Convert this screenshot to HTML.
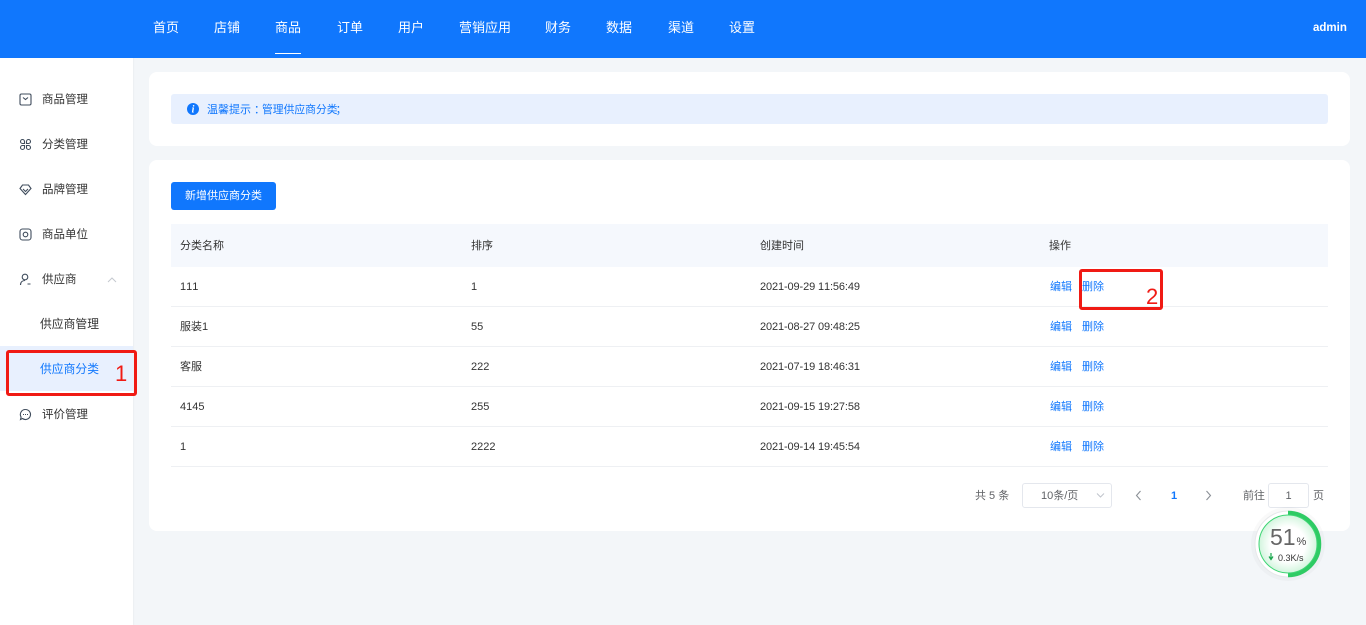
<!DOCTYPE html>
<html lang="zh-CN"><head><meta charset="utf-8"><title>供应商分类</title>
<style>
*{box-sizing:border-box}
html,body{margin:0;padding:0}
body{width:1366px;height:625px;overflow:hidden;position:relative;background:#f3f6f9;font-family:"Liberation Sans","Noto Sans CJK SC",sans-serif;color:#333;font-kerning:none}
.a{position:absolute;white-space:nowrap}
.top{left:0;top:0;width:1366px;height:58px;background:#1077fd}
.nav{top:18px;font-size:13px;line-height:20px;color:#fff}
.side{left:0;top:58px;width:133px;height:567px;background:#fff;box-shadow:1px 0 1px rgba(0,0,0,.03)}
.m{font-size:11.5px;line-height:18px;color:#333}
.s{font-size:11.8px}
.card{background:#fff;border-radius:8px}
.t{font-size:11px;line-height:16px;color:#333}
.d{letter-spacing:-.12px}
.l{font-size:11px;line-height:16px;color:#1077fd}
.line{left:171px;width:1157px;height:1px;background:#eef0f3}
.ic{position:absolute;left:19px;width:13px;height:13px;fill:none;stroke:#3f4c5c;stroke-width:1.100}
.red{border:3px solid #f01a14;border-radius:3px}
.rn{color:#f01a14;font-size:22px;line-height:26px}
</style></head><body>
<div class="a top"></div>
<div class="a nav" style="left:153px">首页</div>
<div class="a nav" style="left:214px">店铺</div>
<div class="a nav" style="left:275px">商品</div>
<div class="a" style="left:275px;top:53px;width:26px;height:1px;background:#fff"></div>
<div class="a nav" style="left:337px">订单</div>
<div class="a nav" style="left:398px">用户</div>
<div class="a nav" style="left:459px">营销应用</div>
<div class="a nav" style="left:545px">财务</div>
<div class="a nav" style="left:606px">数据</div>
<div class="a nav" style="left:668px">渠道</div>
<div class="a nav" style="left:729px">设置</div>
<div class="a" style="left:1313px;top:20px;font-size:11.5px;font-weight:700;line-height:17px;color:#fff">admin</div>

<div class="a side"></div>
<svg class="ic" style="top:93px" viewBox="0 0 13 13"><rect x="1" y="1" width="11" height="11" rx="1.500"/><path d="M4 4.500l2.500 2L9 4.500"/></svg>
<svg class="ic" style="top:138px" viewBox="0 0 13 13"><path d="M5.500 5.500H3.500a2 2 0 1 1 2-2zM7.500 5.500V3.500a2 2 0 1 1 2 2zM5.500 7.500V9.500a2 2 0 1 1-2-2zM7.500 7.500H9.500a2 2 0 1 1-2 2z"/></svg>
<svg class="ic" style="top:183px" viewBox="0 0 13 13"><path d="M3.500 2h6L12 5.500 6.500 11.500 1 5.500zM4 6l2.500 2.500L9 6"/></svg>
<svg class="ic" style="top:228px" viewBox="0 0 13 13"><rect x="1" y="1" width="11" height="11" rx="2.500"/><circle cx="6.500" cy="6.500" r="2.300"/></svg>
<svg class="ic" style="top:273px" viewBox="0 0 13 13"><circle cx="6" cy="4" r="2.800"/><path d="M1.500 12c0-3 2-4.500 4.500-4.500M8.500 11h3"/></svg>
<svg class="ic" style="top:408px" viewBox="0 0 13 13"><path d="M6.500 1.500a5 5 0 1 1-3 9L1.500 11.500l.6-2.400a5 5 0 0 1 4.400-7.600z"/><path d="M4 6.500h1M6 6.500h1M8 6.500h1"/></svg>
<div class="a m" style="left:42px;top:91px">商品管理</div>
<div class="a m" style="left:42px;top:136px">分类管理</div>
<div class="a m" style="left:42px;top:181px">品牌管理</div>
<div class="a m" style="left:42px;top:226px">商品单位</div>
<div class="a m" style="left:42px;top:271px">供应商</div>
<svg class="a" style="left:106px;top:276px" width="12" height="8" viewBox="0 0 12 8" fill="none" stroke="#c4c9cf"><path d="M2 6l4-4 4 4"/></svg>
<div class="a m s" style="left:40px;top:315px">供应商管理</div>
<div class="a" style="left:0;top:346px;width:133px;height:45px;background:#e8f0fe"></div>
<div class="a m s" style="left:40px;top:360px;color:#1077fd">供应商分类</div>
<div class="a m" style="left:42px;top:406px">评价管理</div>

<div class="a card" style="left:149px;top:72px;width:1201px;height:74px"></div>
<div class="a" style="left:171px;top:94px;width:1157px;height:30px;background:#e8f0fe;border-radius:3px"></div>
<svg class="a" style="left:186px;top:102px" width="14" height="14" viewBox="0 0 14 14"><circle cx="7" cy="7" r="6" fill="#1077fd"/><text x="7" y="10.500" text-anchor="middle" font-family="Liberation Serif" font-style="italic" font-weight="700" font-size="10" fill="#fff">i</text></svg>
<div class="a l" style="left:207px;top:102px">温馨提示<span style="margin-left:3px;margin-right:-3px">：</span><span style="font-size:10.8px">管理供应商分类</span><span style="margin-left:-2px">；</span></div>

<div class="a card" style="left:149px;top:160px;width:1201px;height:371px"></div>
<div class="a" style="left:171px;top:182px;width:105px;height:28px;background:#1077fd;border-radius:3px;color:#fff;font-size:11px;line-height:29px;text-align:center">新增供应商分类</div>
<div class="a" style="left:171px;top:224px;width:1157px;height:43px;background:#f5f8fd"></div>
<div class="a t" style="left:180px;top:238px">分类名称</div>
<div class="a t" style="left:471px;top:238px">排序</div>
<div class="a t" style="left:760px;top:238px">创建时间</div>
<div class="a t" style="left:1049px;top:238px">操作</div>

<div class="a t" style="left:180px;top:279px">111</div><div class="a t" style="left:471px;top:279px">1</div><div class="a t d" style="left:760px;top:279px">2021-09-29 11:56:49</div>
<div class="a line" style="top:306px"></div>
<div class="a t" style="left:180px;top:319px">服装1</div><div class="a t" style="left:471px;top:319px">55</div><div class="a t d" style="left:760px;top:319px">2021-08-27 09:48:25</div>
<div class="a line" style="top:346px"></div>
<div class="a t" style="left:180px;top:359px">客服</div><div class="a t" style="left:471px;top:359px">222</div><div class="a t d" style="left:760px;top:359px">2021-07-19 18:46:31</div>
<div class="a line" style="top:386px"></div>
<div class="a t" style="left:180px;top:399px">4145</div><div class="a t" style="left:471px;top:399px">255</div><div class="a t d" style="left:760px;top:399px">2021-09-15 19:27:58</div>
<div class="a line" style="top:426px"></div>
<div class="a t" style="left:180px;top:439px">1</div><div class="a t" style="left:471px;top:439px">2222</div><div class="a t d" style="left:760px;top:439px">2021-09-14 19:45:54</div>
<div class="a line" style="top:466px"></div>

<div class="a l" style="left:1050px;top:279px">编辑</div><div class="a l" style="left:1082px;top:279px">删除</div>
<div class="a l" style="left:1050px;top:319px">编辑</div><div class="a l" style="left:1082px;top:319px">删除</div>
<div class="a l" style="left:1050px;top:359px">编辑</div><div class="a l" style="left:1082px;top:359px">删除</div>
<div class="a l" style="left:1050px;top:399px">编辑</div><div class="a l" style="left:1082px;top:399px">删除</div>
<div class="a l" style="left:1050px;top:439px">编辑</div><div class="a l" style="left:1082px;top:439px">删除</div>

<div class="a" style="left:975px;top:488px;font-size:11px;line-height:16px;color:#606266">共 5 条</div>
<div class="a" style="left:1022px;top:483px;width:90px;height:25px;border:1px solid #e4e7ed;border-radius:3px;background:#fff"></div>
<div class="a" style="left:1041px;top:488px;font-size:11px;line-height:16px;color:#606266">10条/页</div>
<svg class="a" style="left:1095px;top:491px" width="11" height="9" viewBox="0 0 11 9" fill="none" stroke="#c0c4cc"><path d="M2 2.500l3.500 3.500L9 2.500"/></svg>
<svg class="a" style="left:1134px;top:490px" width="9" height="11" viewBox="0 0 9 11" fill="none" stroke="#8b9097" stroke-width="1.100"><path d="M6.500 1L2.500 5.500l4 4.500"/></svg>
<div class="a" style="left:1171px;top:488px;font-size:11px;font-weight:700;line-height:16px;color:#1077fd">1</div>
<svg class="a" style="left:1204px;top:490px" width="9" height="11" viewBox="0 0 9 11" fill="none" stroke="#8b9097" stroke-width="1.100"><path d="M2.500 1l4 4.500-4 4.500"/></svg>
<div class="a" style="left:1243px;top:488px;font-size:11px;line-height:16px;color:#606266">前往</div>
<div class="a" style="left:1268px;top:483px;width:41px;height:25px;border:1px solid #e4e7ed;border-radius:3px;background:#fff;font-size:11px;line-height:25px;text-align:center;color:#606266">1</div>
<div class="a" style="left:1313px;top:488px;font-size:11px;line-height:16px;color:#606266">页</div>

<svg class="a" style="left:1245px;top:501px" width="86" height="86" viewBox="0 0 86 86">
<defs><radialGradient id="g" cx="50%" cy="50%" r="50%"><stop offset="60%" stop-color="#fff"/><stop offset="100%" stop-color="#d3f5de"/></radialGradient></defs>
<circle cx="43" cy="43" r="37" fill="#000" opacity=".025"/>
<circle cx="43" cy="43" r="33" fill="#fff" stroke="#e6e8ea"/>
<path d="M43 12a31 31 0 0 1 0 62" fill="none" stroke="#2ecb64" stroke-width="4.500"/>
<circle cx="43" cy="43" r="29" fill="url(#g)" stroke="#3ed574" stroke-width="1"/>
<text x="25" y="44" font-family="Liberation Sans" font-size="23" fill="#666">51</text>
<text x="51.500" y="44" font-family="Liberation Sans" font-size="11" fill="#444">%</text>
<path d="M26 52v6M24 55.500l2 3 2-3" fill="none" stroke="#1aa64d" stroke-width="1.200"/>
<text x="33" y="60" font-family="Liberation Sans" font-size="9" fill="#333">0.3K/s</text>
</svg>

<div class="a red" style="left:6px;top:350px;width:131px;height:46px"></div>
<div class="a rn" style="left:115px;top:361px">1</div>
<div class="a red" style="left:1079px;top:269px;width:84px;height:41px"></div>
<div class="a rn" style="left:1146px;top:284px">2</div>
</body></html>
